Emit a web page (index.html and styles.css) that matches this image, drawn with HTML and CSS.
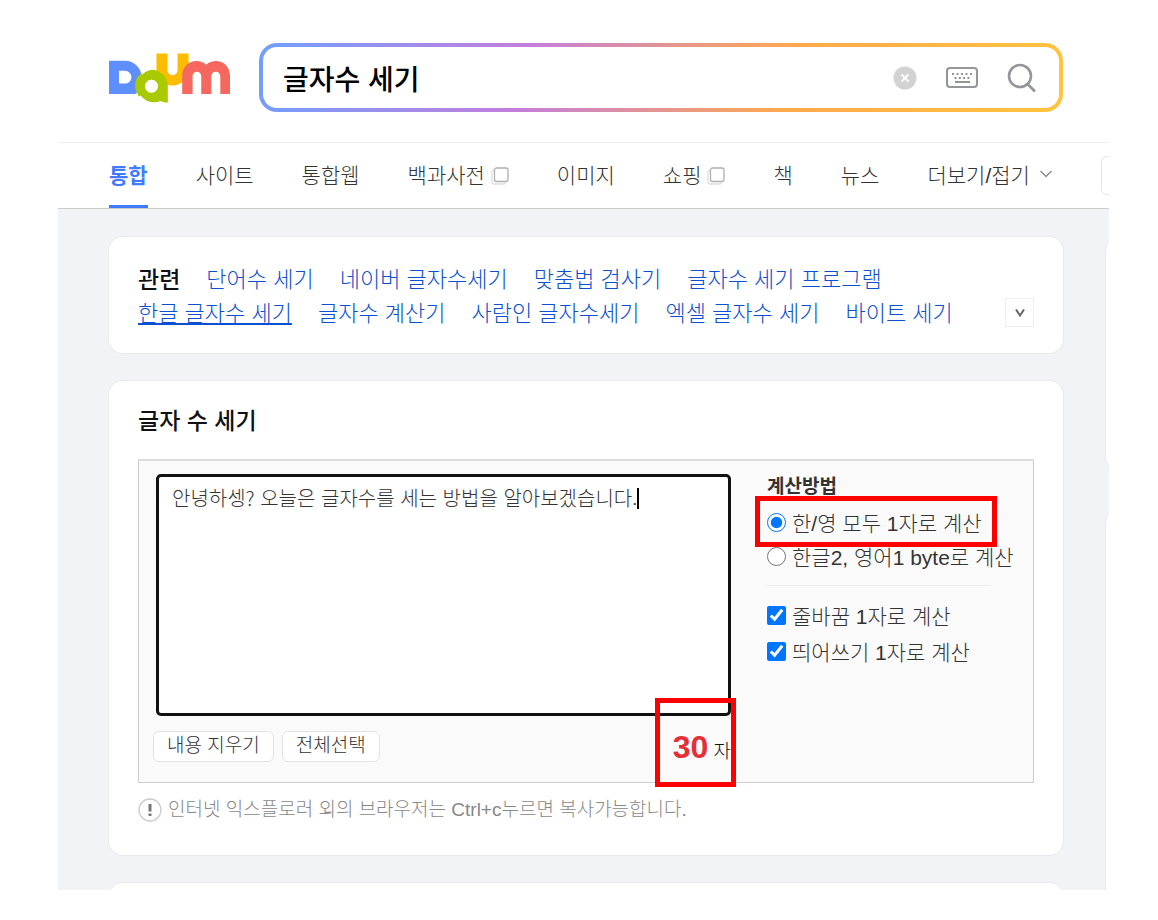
FILE: index.html
```
<!DOCTYPE html>
<html lang="ko">
<head>
    <meta charset="UTF-8">
    <meta name="viewport" content="width=device-width, initial-scale=1.0">
    <title>글자수 세기 – Daum 검색</title>
    <link rel="stylesheet" href="styles.css">
</head>
<body>
    <header class="header">
        <a href="#" class="logo" aria-label="Daum">
            <svg viewBox="57 69 362 149" width="121" height="50">
                <path fill="#ffbc00" d="M199 70h33v50a15 15 0 0 0 30 0V70h33v48a48 48 0 0 1-96 0z"/>
                <path fill="#aaca00" fill-rule="evenodd" d="M184 119a49 49 0 0 1 49 49v49c-9 0-16-1-21-5a49 49 0 1 1-28-93zm0 30a19 19 0 1 0 0 38 19 19 0 0 0 0-38z"/>
                <path fill="#5f8eff" fill-rule="evenodd" d="M57 92h48a49 49 0 0 1 49 49 49 49 0 0 1-18 50H57zm30 30v38h18a19 19 0 0 0 0-38z"/>
                <path fill="#aaca00" fill-rule="evenodd" d="M154 129a49 49 0 0 0-18 48l10 22 22-10-6-40z"/>
                <circle cx="184" cy="168" r="19" fill="#fff"/>
                <path fill="#f5675f" d="M276 191v-53c0-28 20-45 43-45 11 0 21 4 29 11 8-7 18-11 29-11 23 0 42 17 42 45v53h-29v-53a13 13 0 0 0-27 0v53h-30v-53a13 13 0 0 0-26 0v53z"/>
            </svg>
        </a>
        <form class="search">
            <input type="text" class="search-input" aria-label="검색어" value="글자수 세기">
            <button type="button" class="icon-btn" aria-label="지우기">
                <svg width="24" height="24" viewBox="0 0 24 24">
                    <circle cx="12" cy="12" r="11.5" fill="#d3d3d3"/>
                    <path d="M8.5 8.5l7 7m0-7l-7 7" stroke="#fff" stroke-width="1.8"/>
                </svg>
            </button>
            <button type="button" class="icon-btn" aria-label="키보드">
                <svg width="32" height="22" viewBox="0 0 32 22" fill="none" stroke="#939599" stroke-width="2">
                    <rect x="1" y="1" width="30" height="19" rx="3"/>
                    <path d="M6 7h21" stroke-dasharray="2 2.5"/>
                    <path d="M8.500 11h16" stroke-dasharray="2 2.300"/>
                    <path d="M9 15h15"/>
                </svg>
            </button>
            <button type="submit" class="icon-btn" aria-label="검색">
                <svg width="30" height="30" viewBox="0 0 30 30" fill="none" stroke="#939599" stroke-width="2.6">
                    <circle cx="13" cy="13" r="11"/>
                    <path d="M20.500 21l7.500 7.500"/>
                </svg>
            </button>
        </form>
    </header>

    <nav class="tabs">
        <a href="#" class="tab active">통합</a>
        <a href="#" class="tab">사이트</a>
        <a href="#" class="tab">통합웹</a>
        <a href="#" class="tab">백과사전
            <svg class="window-icon" width="18" height="18" viewBox="0 0 18 18" fill="none" stroke-width="1.3">
                <path d="M3 3.500C1.500 3.500 1 4.500 1 5.500V15c0 1.500.8 2 2 2h9c1.500 0 2.300-.5 2.500-1.500" stroke="#ddd"/>
                <rect x="3.500" y="1" width="13.500" height="13.500" rx="2" stroke="#b0b0b0"/>
            </svg>
        </a>
        <a href="#" class="tab">이미지</a>
        <a href="#" class="tab">쇼핑
            <svg class="window-icon" width="18" height="18" viewBox="0 0 18 18" fill="none" stroke-width="1.3">
                <path d="M3 3.500C1.500 3.500 1 4.500 1 5.500V15c0 1.500.8 2 2 2h9c1.500 0 2.300-.5 2.500-1.500" stroke="#ddd"/>
                <rect x="3.500" y="1" width="13.500" height="13.500" rx="2" stroke="#b0b0b0"/>
            </svg>
        </a>
        <a href="#" class="tab">책</a>
        <a href="#" class="tab">뉴스</a>
        <a href="#" class="tab more">더보기/접기
            <svg width="14" height="10" viewBox="0 0 14 10" fill="none" stroke="#888" stroke-width="1.3">
                <path d="M1.500 2L7 7.500 12.500 2"/>
            </svg>
        </a>
        <button type="button" class="tab-option" aria-label="검색옵션"></button>
    </nav>

    <div class="content">
        <main class="main">
            <section class="card related">
                <div class="related-list">
                    <h2 class="related-title">관련</h2>
                    <a href="#">단어수 세기</a>
                    <a href="#">네이버 글자수세기</a>
                    <a href="#">맞춤법 검사기</a>
                    <a href="#">글자수 세기 프로그램</a>
                    <span class="line-break"></span>
                    <a href="#" class="hovered">한글 글자수 세기</a>
                    <a href="#">글자수 계산기</a>
                    <a href="#">사람인 글자수세기</a>
                    <a href="#">엑셀 글자수 세기</a>
                    <a href="#">바이트 세기</a>
                </div>
                <button type="button" class="expand" aria-label="더보기">
                    <svg width="12" height="10" viewBox="0 0 12 10" fill="none" stroke="#666" stroke-width="2">
                        <path d="M2 1.500l4 6 4-6"/>
                    </svg>
                </button>
            </section>

            <section class="card counter">
                <h2 class="counter-title">글자 수 세기</h2>
                <div class="counter-box">
                    <div class="editor">
                        <div class="text-wrap">
                            <textarea class="text" aria-label="내용" spellcheck="false">안녕하셍? 오늘은 글자수를 세는 방법을 알아보겠습니다.</textarea>
                            <span class="caret"></span>
                        </div>
                        <div class="actions">
                            <button type="button" class="btn">내용 지우기</button>
                            <button type="button" class="btn">전체선택</button>
                            <p class="count marked"><strong>30</strong> 자</p>
                        </div>
                    </div>
                    <fieldset class="options">
                        <legend>계산방법</legend>
                        <label class="option marked"><input type="radio" name="method" checked>한/영 모두 1자로 계산</label>
                        <label class="option"><input type="radio" name="method">한글2, 영어1 byte로 계산</label>
                        <hr>
                        <label class="option check"><input type="checkbox" checked>줄바꿈 1자로 계산</label>
                        <label class="option check"><input type="checkbox" checked>띄어쓰기 1자로 계산</label>
                    </fieldset>
                </div>
                <p class="notice">
                    <svg width="24" height="24" viewBox="0 0 24 24">
                        <circle cx="12" cy="12" r="11" fill="none" stroke="#ccc" stroke-width="1.3"/>
                        <path d="M12 6v7.500m0 2v2.500" stroke="#777" stroke-width="3"/>
                    </svg>
                    인터넷 익스플로러 외의 브라우저는 Ctrl+c누르면 복사가능합니다.
                </p>
            </section>

            <section class="card next"></section>
        </main>
        <aside class="side">
            <div class="side-card"></div>
            <div class="side-card tall"></div>
        </aside>
    </div>
</body>
</html>
```
FILE: styles.css
```
* {
    box-sizing: border-box;
}
body {
    height: 100vh;
    margin: 0;
    padding: 0 49px 30px 58px;
    display: flex;
    flex-direction: column;
    overflow: hidden;
    background-color: #fff;
    color: #333;
    font-family: "Liberation Sans", "Noto Sans CJK KR", sans-serif;
    font-size: 21px;
    font-weight: 300;
}
a {
    color: inherit;
    text-decoration: none;
}
h2, p {
    margin: 0;
}
button, input, textarea {
    font-family: inherit;
    font-weight: inherit;
    color: inherit;
}
svg {
    display: block;
    flex: none;
}

/* header */
.header {
    display: flex;
    flex: none;
    align-items: center;
    gap: 29px;
    padding: 43px 46px 30px 51px;
}
.search {
    flex: 1;
    display: flex;
    align-items: center;
    gap: 29px;
    height: 69px;
    padding: 0 22px 0 20px;
    border: 4px solid transparent;
    border-radius: 18px;
    background: linear-gradient(#fff, #fff) padding-box,
        linear-gradient(100deg, #709ffd, #c47edc 33%, #ffa94d 66%, #ffc43d) border-box;
}
.search-input {
    flex: 1;
    min-width: 0;
    padding: 0;
    border: none;
    outline: none;
    background: none;
    color: #000;
    font-size: 28px;
    font-weight: 500;
}
.icon-btn {
    padding: 0;
    border: none;
    background: none;
    cursor: pointer;
}

/* tabs */
.tabs {
    display: flex;
    flex: none;
    gap: 48px;
    height: 67px;
    padding-left: 51px;
    border-top: 1px solid #eee;
    border-bottom: 1px solid #ccc;
    overflow: hidden;
}
.tab {
    display: flex;
    flex: none;
    align-items: center;
    gap: 6px;
    border-bottom: 3px solid transparent;
}
.tab.active {
    border-color: #407bff;
    color: #407bff;
    font-weight: 700;
}
.tab.more {
    gap: 9px;
}
.window-icon {
    margin-top: 3px;
}
.tab-option {
    flex: none;
    width: 60px;
    height: 39px;
    margin: 13px 0;
    border: 1px solid #e5e5e5;
    border-radius: 6px;
    background: #fff;
}

/* content */
.content {
    flex: 1;
    min-height: 0;
    display: grid;
    grid-template-columns: minmax(0, 1fr) 4px;
    gap: 42px;
    padding: 28px 0 0 51px;
    overflow: hidden;
    background-color: #f2f3f7;
}
.main {
    display: flex;
    flex-direction: column;
    gap: 28px;
}
.card {
    flex: none;
    padding: 24px 29px;
    border-radius: 14px;
    background: #fff;
    box-shadow: 0 0 0 1px #e9eaee;
}
.related {
    display: flex;
    align-items: flex-end;
    justify-content: space-between;
    padding-top: 26px;
    padding-bottom: 22px;
}
.related-list {
    display: flex;
    flex-wrap: wrap;
    column-gap: 26px;
    color: #0b50d0;
    font-size: 22px;
    line-height: 34px;
}
.related-title {
    color: #111;
    font-size: 23px;
    font-weight: 500;
}
.line-break {
    width: 100%;
}
.hovered {
    text-decoration: underline;
    text-decoration-thickness: 2px;
    text-underline-offset: 2px;
}
.expand {
    display: flex;
    flex: none;
    align-items: center;
    justify-content: center;
    width: 29px;
    height: 29px;
    margin-bottom: 4px;
    border: 1px solid #eee;
    background: #fff;
}

/* character counter */
.counter-title {
    color: #111;
    font-size: 23px;
    font-weight: 500;
    line-height: 32px;
}
.counter-box {
    display: flex;
    gap: 36px;
    margin-top: 22px;
    padding: 13px 0 20px 14px;
    border: 1px solid #ccc;
    border-top: 2px solid #ddd;
    background: #fafafa;
}
.editor {
    flex: 1;
    min-width: 0;
}
.text-wrap {
    position: relative;
    margin-left: 3px;
}
.text {
    display: block;
    width: 100%;
    height: 242px;
    padding: 8px 13px;
    border: 3px solid #111;
    border-radius: 5px;
    outline: none;
    resize: none;
    background: #fff;
    font-family: "Noto Sans CJK KR", sans-serif;
    font-size: 20px;
    line-height: 26px;
}
.caret {
    position: absolute;
    left: 481px;
    top: 14px;
    width: 2px;
    height: 21px;
    background: #000;
}
.actions {
    display: flex;
    gap: 8px;
    height: 31px;
    margin-top: 15px;
}
.btn {
    height: 31px;
    padding: 0 13px 2px;
    border: 1px solid #e3e3e3;
    border-radius: 6px;
    background: #fff;
    font-size: 19px;
    line-height: 24px;
}
.count {
    margin-left: auto;
    color: #111;
    font-size: 19px;
    line-height: 32px;
}
.count strong {
    color: #e42f38;
    font-size: 32px;
    font-weight: 700;
}
.options {
    width: 266px;
    margin: 0;
    padding: 1px 0 0;
    border: none;
}
.options legend {
    padding: 1px 0 0;
    font-size: 19px;
    font-weight: 700;
    line-height: 24px;
}
.options hr {
    width: 224px;
    margin: 12px 0 11px;
    border: none;
    border-top: 1px solid #eee;
}
.option {
    display: flex;
    align-items: center;
    gap: 6px;
    width: max-content;
    height: 34px;
}
.options legend + .option {
    margin-top: 5px;
}
.option input {
    width: 19px;
    height: 19px;
    margin: 0;
}
.option.check {
    height: 36px;
}
.notice {
    display: flex;
    align-items: center;
    gap: 6px;
    margin-top: 12px;
    padding-bottom: 6px;
    color: #888;
    font-size: 19px;
    line-height: 30px;
}
.next {
    height: 120px;
}

/* red highlight frames */
.marked {
    position: relative;
}
.marked::after {
    content: "";
    position: absolute;
    z-index: 1;
    inset: -9px -15px -8px -12px;
    border: 5px solid #f00;
}
.count.marked::after {
    inset: -33px -5px -25px -18px;
}

/* right column, cut by the window edge */
.side {
    display: flex;
    flex-direction: column;
    gap: 38px;
    overflow: hidden;
}
.side-card {
    flex: none;
    width: 300px;
    height: 234px;
    border: 1px solid #e9eaee;
    border-radius: 14px;
    background: #fff;
}
.side-card.tall {
    height: 600px;
}
```
